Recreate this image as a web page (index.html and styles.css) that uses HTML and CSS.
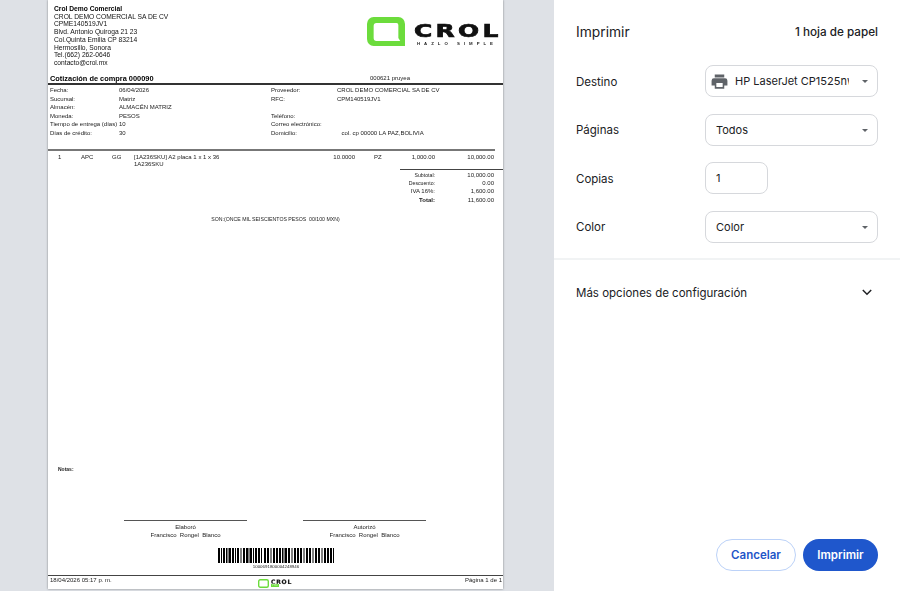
FILE: index.html
```html
<!DOCTYPE html>
<html lang="es">
<head>
<meta charset="utf-8">
<title>Imprimir</title>
<link rel="stylesheet" href="styles.css">
</head>
<body>
<div class="app">
  <main class="preview">
    <article class="paper">
      <header class="doc-head">
        <div class="company">
          <strong>Crol Demo Comercial</strong>
          <div>CROL DEMO COMERCIAL SA DE CV</div>
          <div>CPME140519JV1</div>
          <div>Blvd. Antonio Quiroga 21 23</div>
          <div>Col.Quinta Emilia CP 83214</div>
          <div>Hermosillo, Sonora</div>
          <div>Tel.(662) 262-0646</div>
          <div>contacto@crol.mx</div>
        </div>
        <div class="logo">
          <svg class="logo-mark" width="38" height="29" viewBox="0 0 40 29" preserveAspectRatio="none"><path fill="#6cdc3c" d="M7 0h26a7 7 0 0 1 7 7v22H7a7 7 0 0 1-7-7V7a7 7 0 0 1 7-7z"/><path fill="#fff" d="M10 6h21a2 2 0 0 1 2 2v13l2 3H10a3 3 0 0 1-3-3V9a3 3 0 0 1 3-3z"/></svg>
          <div class="logo-text">
            <div class="logo-word">CROL</div>
            <div class="logo-tag">HAZLO SIMPLE</div>
          </div>
        </div>
      </header>
      <div class="title-row">
        <h1>Cotización de compra 000090</h1>
        <span class="ref">000621 pruyea</span>
      </div>
      <section class="meta">
        <div class="meta-col">
          <div class="m"><span>Fecha:</span><span>06/04/2026</span></div>
          <div class="m"><span>Sucursal:</span><span>Matriz</span></div>
          <div class="m"><span>Almacén:</span><span>ALMACÉN MATRIZ</span></div>
          <div class="m"><span>Moneda:</span><span>PESOS</span></div>
          <div class="m"><span>Tiempo de entrega (días)</span><span>10</span></div>
          <div class="m"><span>Días de crédito:</span><span>30</span></div>
        </div>
        <div class="meta-col right">
          <div class="m"><span>Proveedor:</span><span>CROL DEMO COMERCIAL SA DE CV</span></div>
          <div class="m"><span>RFC:</span><span>CPM140519JV1</span></div>
          <div class="m"><span></span><span></span></div>
          <div class="m"><span>Teléfono:</span><span></span></div>
          <div class="m"><span>Correo electrónico:</span><span></span></div>
          <div class="m"><span>Domicilio:</span><span class="addr">col. cp 00000 LA PAZ,BOLIVIA</span></div>
        </div>
      </section>
      <section class="items">
        <div class="c-qty">1</div>
        <div class="c-code">APC</div>
        <div class="c-unit">GG</div>
        <div class="c-desc">[1A236SKU] A2 placa 1 x 1 x 36<br>1A236SKU</div>
        <div class="c-num">10.0000</div>
        <div class="c-pz">PZ</div>
        <div class="c-price">1,000.00</div>
        <div class="c-total">10,000.00</div>
      </section>
      <section class="totals">
        <div class="t small"><span>Subtotal:</span><span>10,000.00</span></div>
        <div class="t small"><span>Descuento:</span><span>0.00</span></div>
        <div class="t"><span>IVA 16%:</span><span>1,600.00</span></div>
        <div class="t"><b>Total:</b><span>11,600.00</span></div>
      </section>
      <p class="amount">SON:(ONCE MIL SEISCIENTOS PESOS  00/100 MXN)</p>
      <p class="notes">Notas:</p>
      <section class="signs">
        <div class="sign"><div>Elaboró</div><div>Francisco&nbsp; Rongel&nbsp; Blanco</div></div>
        <div class="sign"><div>Autorizó</div><div>Francisco&nbsp; Rongel&nbsp; Blanco</div></div>
      </section>
      <div class="barcode">
        <svg width="116" height="15" viewBox="0 0 116 15"><path stroke="#000" stroke-width="2" d="M1 0v15M6 0v15M12 0v15M15 0v15M20 0v15M26 0v15M29 0v15M33 0v15M38 0v15M41 0v15M47 0v15M50 0v15M56 0v15M59 0v15M62 0v15M68 0v15M71 0v15M77 0v15M80 0v15M83 0v15M89 0v15M92 0v15M98 0v15M101 0v15M107 0v15M110 0v15M113 0v15"/><path stroke="#000" stroke-width="1" d="M3.5 0v15M8.5 0v15M10 0v15M17.5 0v15M23 0v15M31 0v15M35.5 0v15M43.5 0v15M53 0v15M64.5 0v15M66 0v15M74 0v15M86 0v15M95 0v15M104 0v15M115.5 0v15"/></svg>
        <div class="digits">1000691800004248946</div>
      </div>
      <footer class="doc-foot">
        <span>18/04/2026 05:17 p. m.</span>
        <div class="mini-logo">
          <svg width="11" height="9" viewBox="0 0 11 9"><rect x=".7" y=".7" width="9.6" height="7.6" rx="1.5" fill="#fff" stroke="#6cdc3c" stroke-width="1.4"/></svg>
          <div class="mini-text"><div class="mini-word">CROL</div><div class="mini-tag">PRO</div></div>
        </div>
        <span>Página 1 de 1</span>
      </footer>
    </article>
  </main>
  <aside class="panel">
    <div class="panel-head">
      <h2>Imprimir</h2>
      <span class="sheets">1 hoja de papel</span>
    </div>
    <div class="settings">
      <div class="row">
        <label>Destino</label>
        <div class="select">
          <svg class="printer" width="19" height="19" viewBox="0 0 24 24"><path fill="#5f6368" d="M19 8H5a3 3 0 0 0-3 3v6h4v4h12v-4h4v-6a3 3 0 0 0-3-3zm-3 11H8v-5h8v5zM18 3H6v4h12V3z"/></svg>
          <span class="select-text clip">HP LaserJet CP1525nw</span>
          <i class="caret"></i>
        </div>
      </div>
      <div class="row">
        <label>Páginas</label>
        <div class="select"><span class="select-text">Todos</span><i class="caret"></i></div>
      </div>
      <div class="row">
        <label>Copias</label>
        <div class="input">1</div>
      </div>
      <div class="row">
        <label>Color</label>
        <div class="select"><span class="select-text">Color</span><i class="caret"></i></div>
      </div>
    </div>
    <div class="more">
      <span>Más opciones de configuración</span>
      <svg width="10" height="7" viewBox="0 0 10 7"><path d="M.8 1 5 5.2 9.2 1" fill="none" stroke="#202124" stroke-width="1.5"/></svg>
    </div>
    <div class="actions">
      <button class="btn ghost">Cancelar</button>
      <button class="btn solid">Imprimir</button>
    </div>
  </aside>
</div>
</body>
</html>
```
FILE: styles.css
```css
* { box-sizing: border-box; }
html, body { margin: 0; height: 100%; overflow: hidden; }
body { font-family: Inter, "Liberation Sans", sans-serif; color: #202124; background: #fff; }
h1, h2, p { margin: 0; font: inherit; }

.app { display: flex; height: 591px; }

/* preview */
.preview { width: 554px; background: #dee1e6; padding-left: 48px; }
.paper {
  width: 455px; height: 589px; background: #fff;
  box-shadow: 0 0 2px rgba(60, 64, 67, .6);
  display: flex; flex-direction: column;
  font-family: "Liberation Sans", Arial, sans-serif;
  font-size: 6px; line-height: 8.4px; color: #222;
  filter: blur(.3px);
}
.doc-head { height: 73px; flex: none; display: flex; justify-content: space-between; padding: 5px 3px 0 6px; }
.company { font-size: 6.7px; line-height: 7.72px; color: #111; }
.company strong { display: block; color: #000; }
.logo { display: flex; gap: 9px; margin-top: 12px; height: 29px; }
.logo-mark { display: block; }
.logo-text { display: flex; flex-direction: column; width: 86px; padding-top: 7px; }
.logo-word { font: 700 18px/14px "DejaVu Sans", sans-serif; height: 14px; letter-spacing: 2.4px; color: #111; -webkit-text-stroke: .7px #111; white-space: nowrap; transform: scaleX(1.38); transform-origin: left center; }
.logo-tag { font-size: 4.3px; line-height: 5px; font-weight: 700; letter-spacing: 4px; text-align: center; color: #222; white-space: nowrap; margin-top: 3px; }

.title-row { flex: none; height: 12px; display: flex; padding-left: 2px; border-bottom: 2px solid #333; }
.title-row h1 { font-size: 7.4px; line-height: 12px; font-weight: 700; color: #000; width: 320px; white-space: nowrap; }
.ref { font-size: 6px; line-height: 10px; }

.meta { flex: none; display: flex; height: 66px; padding: 1px 0 0 2px; border-bottom: 2px solid #777; margin-right: 8px; }
.meta-col { width: 221px; }
.meta-col.right { width: 220px; }
.m { display: flex; height: 8.4px; white-space: nowrap; }
.m:first-child { height: 9px; }
.m > span:first-child { width: 69px; }
.right .m > span:first-child { width: 66px; }
.addr { padding-left: 4.5px; }

.items { flex: none; display: flex; height: 18px; padding-top: 3px; line-height: 7px; margin-right: 8px; }
.items > div { white-space: nowrap; }
.c-qty { width: 33px; padding-left: 10px; }
.c-code { width: 31px; }
.c-unit { width: 22px; }
.c-desc { width: 199px; }
.c-num { width: 22px; display: flex; justify-content: flex-end; }
.c-pz { width: 36px; padding-left: 19px; }
.c-price { width: 44px; text-align: right; }
.c-total { width: 59px; text-align: right; }

.totals { flex: none; margin-left: 352px; border-top: 1px solid #444; padding: 1px 9px 0 0; }
.t { display: flex; height: 8.2px; line-height: 8.2px; }
.t > :first-child { width: 35px; text-align: right; white-space: nowrap; }
.t > :last-child { flex: 1; text-align: right; }
.t.small > :first-child { font-size: 5.2px; }

.amount { margin-top: 11px; text-align: center; font-size: 5.2px; line-height: 8px; white-space: pre; }
.notes { margin: 242px 0 0 10px; font-weight: 700; font-size: 5px; line-height: 8px; }

.signs { flex: none; display: flex; gap: 56px; margin: 47px 0 0 76px; }
.sign { width: 123px; border-top: 1px solid #555; text-align: center; padding-top: 2px; line-height: 8.4px; }

.barcode { flex: none; width: 116px; margin: 8px 0 0 170px; }
.barcode svg { display: block; }
.digits { font-size: 4.4px; line-height: 7px; text-align: center; white-space: nowrap; }

.doc-foot { flex: none; display: flex; justify-content: space-between; align-items: flex-start; border-top: 1px solid #444; margin-top: 5px; padding: 1px 1px 0 2px; line-height: 7px; height: 13px; }
.doc-foot > span { width: 205px; }
.doc-foot > span:last-child { text-align: right; }
.mini-logo { display: flex; gap: 2px; padding-top: 2px; }
.mini-text { display: flex; flex-direction: column; width: 23px; }
.mini-word { font: 700 6px/5.5px "DejaVu Sans", sans-serif; letter-spacing: .8px; color: #111; -webkit-text-stroke: .2px #111; }
.mini-tag { width: 8px; font-size: 2.6px; line-height: 3px; color: #d8f5cb; background: #6cdc3c; text-align: center; }

/* panel */
.panel { width: 346px; height: 591px; display: flex; flex-direction: column; background: #fff; }
.panel-head { display: flex; justify-content: space-between; align-items: center; padding: 22px 22px 0; height: 42px; }
.panel-head h2 { font-size: 13.8px; line-height: 20px; font-weight: 400; color: #202124; }
.sheets { font-size: 11.7px; font-weight: 500; color: #202124; }
.settings { display: flex; flex-direction: column; gap: 16.5px; padding: 23px 22px 15px; border-bottom: 2px solid #f1f3f4; }
.row { display: flex; align-items: center; height: 32px; }
.row label { width: 129px; font-size: 11.5px; padding-top: 1px; color: #202124; }
.select, .input { height: 32px; border: 1px solid #d6d8dc; border-radius: 8px; display: flex; align-items: center; font-size: 11px; }
.select { width: 173px; padding-left: 10px; position: relative; }
.input { width: 63px; padding-left: 10px; }
.printer { margin: 0 6.5px 0 -6.5px; flex: none; }
.clip { width: 114px; overflow: hidden; white-space: nowrap; }
.caret { position: absolute; right: 9px; top: 14px; border: 3.2px solid transparent; border-top-color: #5f6368; border-bottom: 0; }
.more { display: flex; justify-content: space-between; align-items: center; height: 64px; padding: 2px 28px 0 22px; font-size: 11.5px; }
.actions { display: flex; justify-content: flex-end; gap: 7px; padding-right: 22px; margin-top: auto; padding-bottom: 20px; }
.btn { height: 32px; border-radius: 16px; font: 600 11.5px Inter, "Liberation Sans", sans-serif; border: 1px solid transparent; padding: 0; }
.ghost { width: 80px; background: #fff; color: #1e55c8; border-color: #bcd2f8; }
.solid { width: 75px; background: #1f57cc; color: #fff; }
```
